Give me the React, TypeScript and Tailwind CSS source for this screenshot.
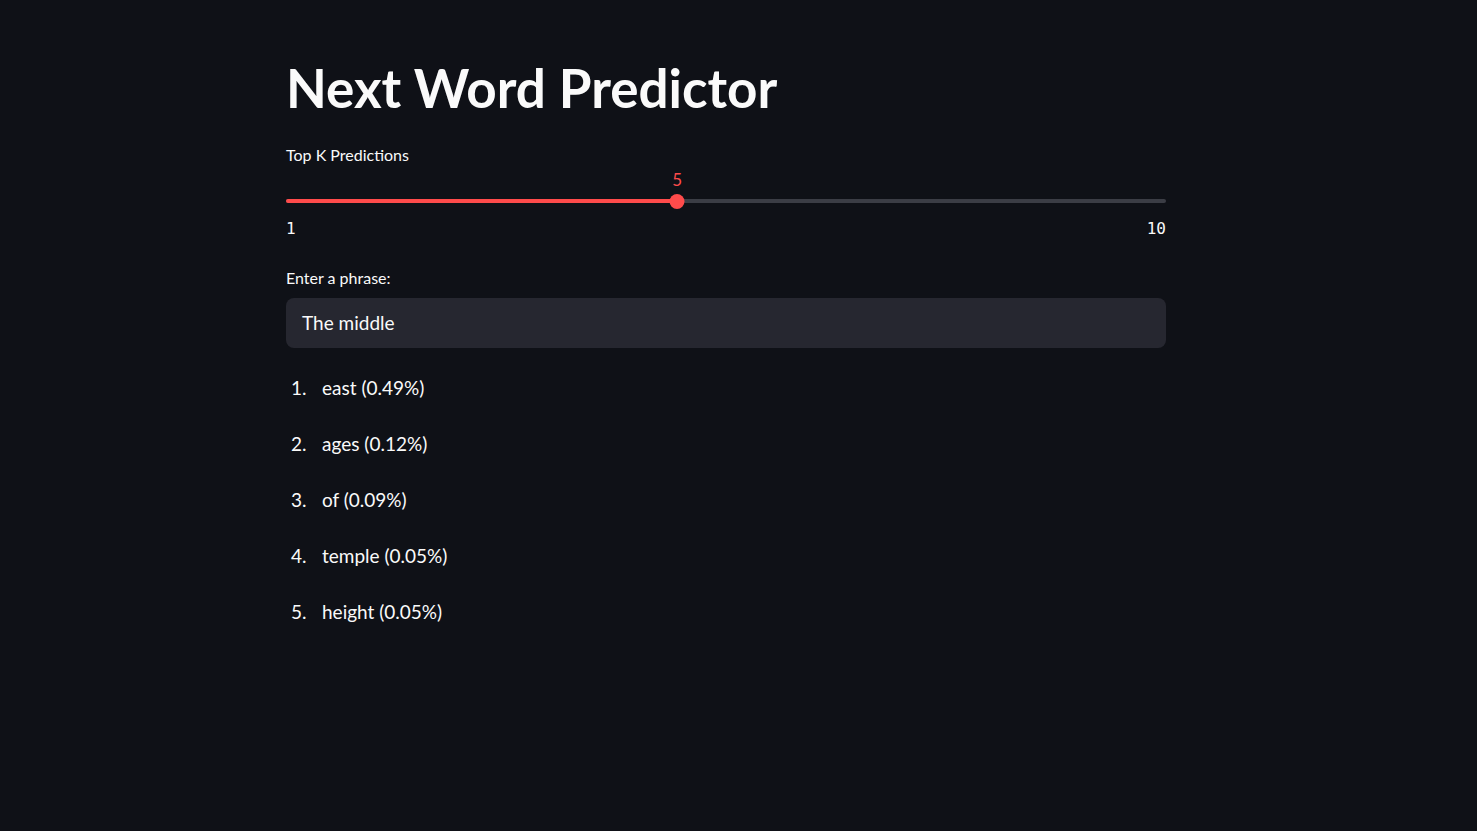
import { FC } from 'react';

const predictions = [
  { word: 'east', pct: '0.49%' },
  { word: 'ages', pct: '0.12%' },
  { word: 'of', pct: '0.09%' },
  { word: 'temple', pct: '0.05%' },
  { word: 'height', pct: '0.05%' },
];

const min = 1;
const max = 10;
const value = 5;

const Slider: FC = () => {
  const pct = ((value - min) / (max - min)) * 100;
  return (
    <div className="flex flex-col">
      <div className="relative h-[20px] mt-[5px]">
        <span
          className="absolute top-0 -translate-x-1/2 text-[17px] leading-[20px] text-[#ff4b4b]"
          style={{ left: `${pct}%` }}
        >
          {value}
        </span>
      </div>
      <div className="relative h-[14px] mt-[4px] flex items-center">
        <div className="h-[4px] w-full rounded-full bg-[#3b3d45]" />
        <div
          className="absolute left-0 h-[4px] rounded-full bg-[#ff4b4b]"
          style={{ width: `${pct}%` }}
        />
        <div
          className="absolute h-[15px] w-[15px] -translate-x-1/2 rounded-full bg-[#ff4b4b]"
          style={{ left: `${pct}%` }}
        />
      </div>
      <div
        className="mt-[11px] flex h-[20px] items-center justify-between text-[16px] text-[#fafafa]"
        style={{ fontFamily: '"DejaVu Sans Mono", "Liberation Mono", monospace' }}
      >
        <span>{min}</span>
        <span>{max}</span>
      </div>
    </div>
  );
};

export default function App() {
  return (
    <div
      className="min-h-screen w-full bg-[#0f1117] text-[#fafafa]"
      style={{ fontFamily: 'Lato, "Noto Sans", sans-serif' }}
    >
      <div className="ml-[286px] w-[880px] pt-[57px]">
        <h1 className="flex h-[60px] items-center text-[53px] font-bold leading-none">
          Next Word Predictor
        </h1>

        <div className="mt-[28px] flex h-[20px] items-center text-[16px]">Top K Predictions</div>
        <Slider />

        <div className="mt-[29px] flex h-[20px] items-center text-[16px]">Enter a phrase:</div>
        <div className="mt-[10px] flex h-[50px] items-center rounded-lg bg-[#262730] px-[16px] text-[19px]">
          The middle
        </div>

        <ol className="mt-[12px] flex flex-col">
          {predictions.map((p, i) => (
            <li key={p.word} className="flex h-[56px] items-center text-[19px]">
              <span className="w-[36px] pl-[5px]">{i + 1}.</span>
              <span>
                {p.word} ({p.pct})
              </span>
            </li>
          ))}
        </ol>
      </div>
    </div>
  );
}
